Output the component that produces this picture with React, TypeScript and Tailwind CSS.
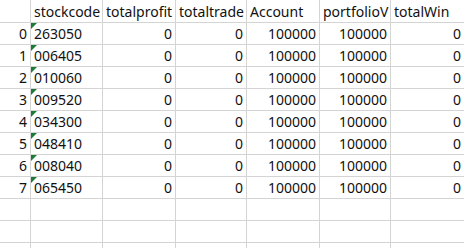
import React from "react";

const rows = ["263050", "006405", "010060", "009520", "034300", "048410", "008040", "065450"];
const headers = ["stockcode", "totalprofit", "totaltrade", "Account", "portfolioV", "totalWin"];
const widths = ["w-[31px]", "w-[72px]", "w-[73px]", "w-[71px]", "w-[73px]", "w-[71px]", "w-[73px]"];

function Cell({ w, children, right, h, last }: { w: string; children?: React.ReactNode; right?: boolean; h: string; last?: boolean }) {
  return (
    <div
      className={`${w} ${h} shrink-0 ${last ? "" : "border-r"} border-b border-[#d4d4d4] flex items-center overflow-hidden whitespace-nowrap relative ${
        right ? "justify-end pr-[3px]" : "justify-start pl-[3px]"
      }`}
    >
      {children}
    </div>
  );
}

export default function App() {
  return (
    <div
      className="w-[464px] h-[248px] overflow-hidden bg-white text-[14px] text-[#111]"
      style={{ fontFamily: '"Noto Sans", "Liberation Sans", sans-serif' }}
    >
      <div className="flex">
        <Cell w={widths[0]} h="h-[23px]" right />
        {headers.map((t, i) => (
          <Cell key={t} w={widths[i + 1]} h="h-[23px]" last={i === 5}>
            {t}
          </Cell>
        ))}
      </div>
      {rows.map((code, i) => (
        <div className="flex" key={code}>
          <Cell w={widths[0]} h="h-[22px]" right>
            {i}
          </Cell>
          <Cell w={widths[1]} h="h-[22px]">
            <span className="absolute left-0 top-0 w-0 h-0 border-t-[6px] border-r-[6px] border-t-[#1f7a3a] border-r-transparent" />
            {code}
          </Cell>
          <Cell w={widths[2]} h="h-[22px]" right>0</Cell>
          <Cell w={widths[3]} h="h-[22px]" right>0</Cell>
          <Cell w={widths[4]} h="h-[22px]" right>100000</Cell>
          <Cell w={widths[5]} h="h-[22px]" right>100000</Cell>
          <Cell w={widths[6]} h="h-[22px]" right last>0</Cell>
        </div>
      ))}
      {[0, 1, 2].map((k) => (
        <div className="flex" key={k}>
          {widths.map((w, j) => (
            <Cell key={j} w={w} h="h-[22px]" last={j === 6} />
          ))}
        </div>
      ))}
    </div>
  );
}
